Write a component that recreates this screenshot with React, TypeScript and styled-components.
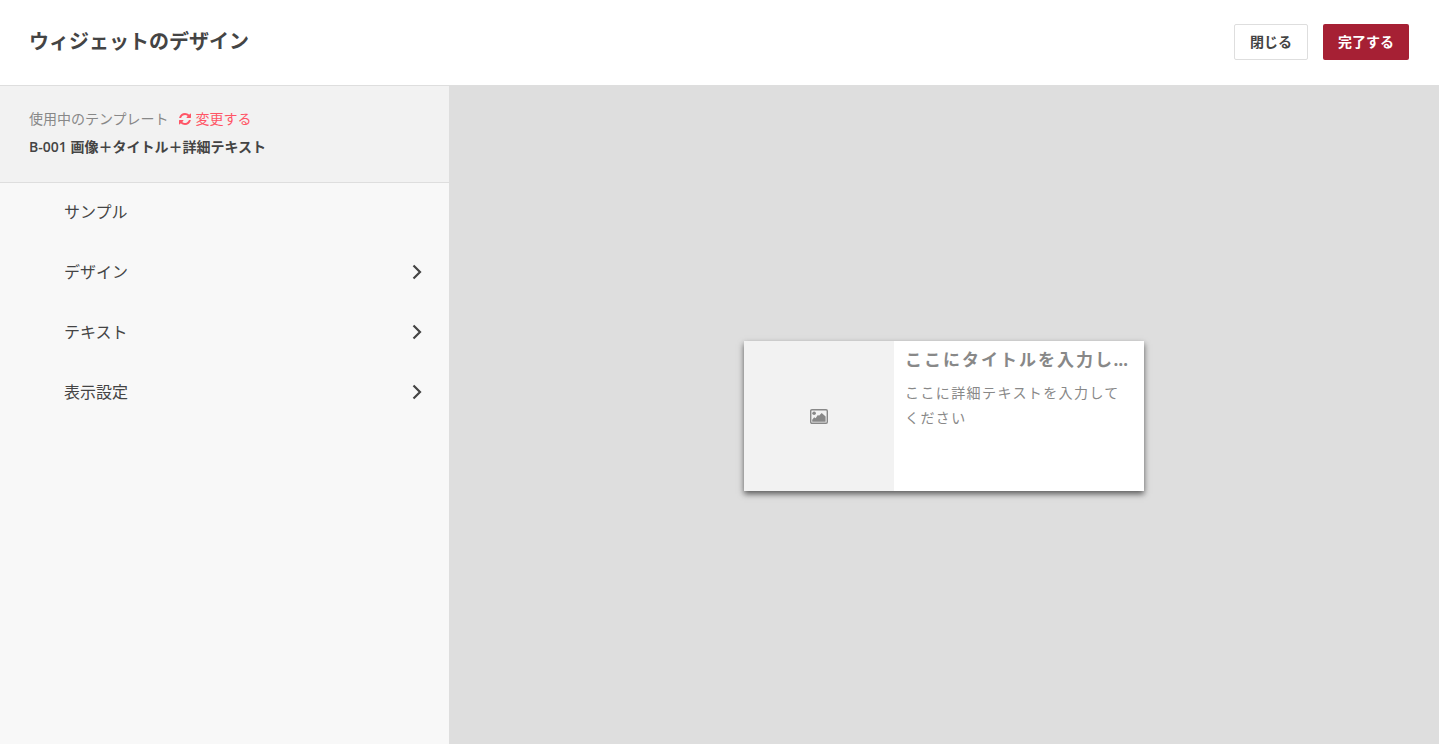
import React from "react";
import styled, { createGlobalStyle } from "styled-components";

const GlobalStyle = createGlobalStyle`
  *, *::before, *::after { box-sizing: border-box; }
  body {
    margin: 0;
    background: #dedede;
    color: #444;
    font-family: "Open Sans", "Noto Sans CJK JP", sans-serif;
    font-size: 14px;
    line-height: 28px;
  }
  button { font-family: inherit; color: inherit; cursor: pointer; }
`;

const Page = styled.div`
  display: flex;
  flex-direction: column;
  min-height: 100vh;
`;

const Header = styled.header`
  display: flex;
  align-items: center;
  justify-content: space-between;
  padding: 24px 30px 25px 29px;
  background: #fff;
  border-bottom: 1px solid #dedede;
`;

const PageTitle = styled.h1`
  margin: 0;
  font-size: 20px;
  line-height: 32px;
  font-weight: 700;
`;

const Actions = styled.div`
  display: flex;
  gap: 15px;
`;

const ActionButton = styled.button<{ $primary?: boolean }>`
  height: 36px;
  padding: 0 15px;
  border: ${(p) => (p.$primary ? "0" : "1px solid #dedede")};
  border-radius: 2px;
  background: ${(p) => (p.$primary ? "#a62034" : "#fff")};
  color: ${(p) => (p.$primary ? "#fff" : "#444")};
  font-size: 14px;
  line-height: 20px;
  font-weight: 700;
`;

const Workspace = styled.div`
  display: flex;
  flex: 1;
`;

const Sidebar = styled.aside`
  flex: 0 0 449px;
  background: #f8f8f8;
`;

const TemplateInfo = styled.section`
  padding: 19px 29px 21px;
  background: #f2f2f2;
  border-bottom: 1px solid #dedede;
`;

const TemplateLabel = styled.div`
  display: flex;
  align-items: center;
  gap: 10px;
  color: #888;
`;

const ChangeLink = styled.a`
  display: flex;
  align-items: center;
  gap: 5px;
  color: #ff5566;
  text-decoration: none;
`;

const TemplateName = styled.div`
  font-weight: 600;
`;

const MenuItem = styled.button`
  display: flex;
  align-items: center;
  justify-content: space-between;
  width: 100%;
  height: 60px;
  padding: 0 27px 2px 64px;
  border: 0;
  background: transparent;
  font-size: 16px;
  line-height: 24px;
  text-align: left;
`;

const Preview = styled.main`
  display: flex;
  flex: 1;
  align-items: center;
  justify-content: center;
  padding-top: 2px;
  background: #dedede;
`;

const Card = styled.article`
  display: flex;
  width: 400px;
  height: 150px;
  background: #fff;
  color: #888;
  box-shadow: 0 3px 6px rgba(0, 0, 0, 0.6);
`;

const CardImage = styled.div`
  display: flex;
  flex: 0 0 150px;
  align-items: center;
  justify-content: center;
  background: #f2f2f2;
`;

const CardBody = styled.div`
  flex: 1;
  min-width: 0;
  padding: 4px 14px 4px 11px;
`;

const CardTitle = styled.h2`
  margin: 0 0 5px;
  overflow: hidden;
  font-size: 17px;
  line-height: 30px;
  font-weight: 700;
  letter-spacing: 2px;
  text-overflow: ellipsis;
  white-space: nowrap;
`;

const CardText = styled.p`
  margin: 0;
  font-size: 14px;
  line-height: 25px;
  letter-spacing: 0.1em;
`;

const RefreshIcon = () => (
  <svg width="12" height="12" viewBox="0 0 1536 1536" fill="currentColor" aria-hidden="true">
    <path d="M1511 928q0 5-1 7-64 268-268 434.5t-478 166.5q-146 0-282.5-55t-243.5-157l-129 129q-19 19-45 19t-45-19-19-45v-448q0-26 19-45t45-19h448q26 0 45 19t19 45-19 45l-137 137q71 66 161 102t187 36q134 0 250-65t186-179q11-17 53-117 8-23 30-23h192q13 0 22.5 9.5t9.5 22.5zM1536 128v448q0 26-19 45t-45 19h-448q-26 0-45-19t-19-45 19-45l138-138q-148-137-349-137-134 0-250 65t-186 179q-11 17-53 117-8 23-30 23h-199q-13 0-22.5-9.5t-9.5-22.5v-7q65-268 270-434.5t480-166.5q146 0 284 55.5t245 156.5l130-129q19-19 45-19t45 19 19 45z" />
  </svg>
);

const ChevronIcon = () => (
  <svg width="10" height="16" viewBox="0 0 10 16" fill="none" stroke="currentColor" strokeWidth="2.2" aria-hidden="true">
    <path d="M1.500 1.500 8 8l-6.500 6.500" />
  </svg>
);

const ImageIcon = () => (
  <svg width="18" height="15" viewBox="0 0 18 15" aria-hidden="true">
    <rect x="0.7" y="0.7" width="16.600" height="13.600" rx="1.200" fill="none" stroke="currentColor" strokeWidth="1.400" />
    <circle cx="4.100" cy="4.300" r="1.800" fill="currentColor" />
    <path d="M2.200 12.700v-2l2-2.500 1.400 1 2-2.900 1.700.2 2.400-2.600 3.900 3.500v5.300z" fill="currentColor" />
  </svg>
);

const menu = [
  { label: "サンプル", expandable: false },
  { label: "デザイン", expandable: true },
  { label: "テキスト", expandable: true },
  { label: "表示設定", expandable: true },
];

export default function App() {
  return (
    <>
      <GlobalStyle />
      <Page>
        <Header>
          <PageTitle>ウィジェットのデザイン</PageTitle>
          <Actions>
            <ActionButton type="button">閉じる</ActionButton>
            <ActionButton type="button" $primary>完了する</ActionButton>
          </Actions>
        </Header>
        <Workspace>
          <Sidebar>
            <TemplateInfo>
              <TemplateLabel>
                使用中のテンプレート
                <ChangeLink href="#templates">
                  <RefreshIcon />
                  変更する
                </ChangeLink>
              </TemplateLabel>
              <TemplateName>B-001 画像＋タイトル＋詳細テキスト</TemplateName>
            </TemplateInfo>
            <nav>
              {menu.map((item) => (
                <MenuItem key={item.label} type="button">
                  {item.label}
                  {item.expandable && <ChevronIcon />}
                </MenuItem>
              ))}
            </nav>
          </Sidebar>
          <Preview>
            <Card>
              <CardImage>
                <ImageIcon />
              </CardImage>
              <CardBody>
                <CardTitle>ここにタイトルを入力してください</CardTitle>
                <CardText>ここに詳細テキストを入力してください</CardText>
              </CardBody>
            </Card>
          </Preview>
        </Workspace>
      </Page>
    </>
  );
}
